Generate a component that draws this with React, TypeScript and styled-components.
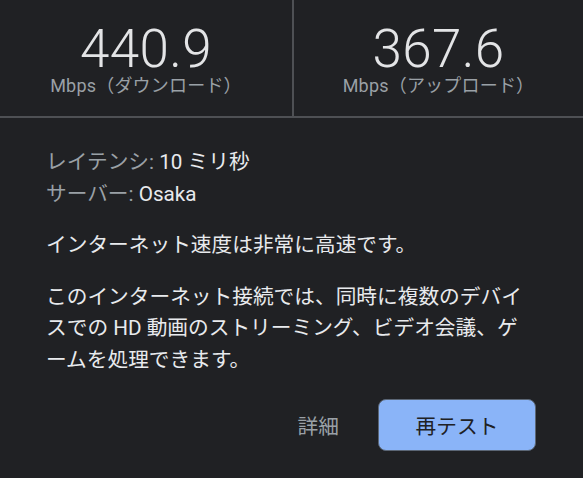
import React from "react";
import styled, { createGlobalStyle } from "styled-components";

const GlobalStyle = createGlobalStyle`
  html, body {
    margin: 0;
    padding: 0;
    background: #202124;
  }
  body {
    font-family: "Roboto", "Noto Sans CJK JP", sans-serif;
    -webkit-font-smoothing: antialiased;
  }
`;

const Page = styled.div`
  width: 583px;
  height: 478px;
  background: #202124;
  color: #e8eaed;
  overflow: hidden;
  display: flex;
  flex-direction: column;
`;

const Header = styled.div`
  display: grid;
  grid-template-columns: 292px 2px 1fr;
  height: 116px;
  border-bottom: 2px solid #4e5054;
`;

const VDivider = styled.div`
  background: #4e5054;
`;

const Stat = styled.div`
  display: flex;
  flex-direction: column;
  align-items: center;
  padding-top: 24px;
`;

const StatValue = styled.div`
  font-family: "Roboto", sans-serif;
  font-weight: 300;
  font-size: 53px;
  line-height: 51px;
  color: #e3e4e6;
  letter-spacing: 0.3px;
`;

const StatUnit = styled.div`
  font-family: "Roboto", "Noto Sans CJK JP", sans-serif;
  font-size: 18px;
  line-height: 22px;
  color: #9aa0a6;
  letter-spacing: 0.2px;
`;

const Body = styled.div`
  padding: 29px 47px 0 46px;
  display: flex;
  flex-direction: column;
  gap: 20px;
  font-size: 20.7px;
  line-height: 31.5px;
`;

const InfoList = styled.div`
  display: flex;
  flex-direction: column;
`;

const InfoRow = styled.div`
  white-space: nowrap;
`;

const Label = styled.span`
  color: #9aa0a6;
`;

const Value = styled.span`
  color: #e8eaed;
`;

const Text = styled.p`
  margin: 0;
  color: #e8eaed;
`;

const Actions = styled.div`
  margin-top: 2.5px;
  display: flex;
  justify-content: flex-end;
  align-items: center;
  gap: 23px;
`;

const TextButton = styled.button`
  background: none;
  border: none;
  padding: 0 16px;
  height: 52px;
  font-family: "Roboto", "Noto Sans CJK JP", sans-serif;
  font-size: 20.7px;
  color: #9aa0a6;
  cursor: pointer;
`;

const PrimaryButton = styled.button`
  width: 158px;
  height: 52px;
  box-sizing: border-box;
  border-radius: 8px;
  border: 1px solid #5b6675;
  background: #8ab4f8;
  color: #202124;
  font-family: "Roboto", "Noto Sans CJK JP", sans-serif;
  font-size: 20.7px;
  cursor: pointer;
  padding: 0;
`;

export default function App() {
  return (
    <>
      <GlobalStyle />
      <Page>
        <Header>
          <Stat>
            <StatValue>440.9</StatValue>
            <StatUnit>Mbps（ダウンロード）</StatUnit>
          </Stat>
          <VDivider />
          <Stat>
            <StatValue>367.6</StatValue>
            <StatUnit>Mbps（アップロード）</StatUnit>
          </Stat>
        </Header>
        <Body>
          <InfoList>
            <InfoRow>
              <Label>レイテンシ: </Label>
              <Value>10 ミリ秒</Value>
            </InfoRow>
            <InfoRow>
              <Label>サーバー: </Label>
              <Value>Osaka</Value>
            </InfoRow>
          </InfoList>
          <Text>インターネット速度は非常に高速です。</Text>
          <Text>
            このインターネット接続では、同時に複数のデバイスでの HD
            動画のストリーミング、ビデオ会議、ゲームを処理できます。
          </Text>
          <Actions>
            <TextButton>詳細</TextButton>
            <PrimaryButton>再テスト</PrimaryButton>
          </Actions>
        </Body>
      </Page>
    </>
  );
}
